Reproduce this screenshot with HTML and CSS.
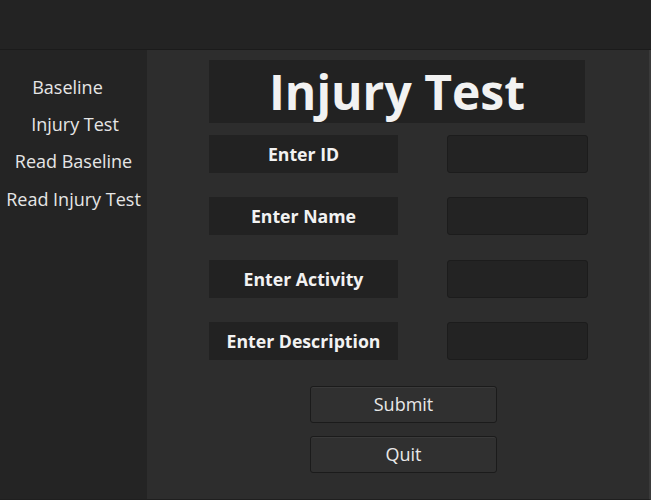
FILE: index.html
```html
<!DOCTYPE html>
<html>
<head>
<meta charset="utf-8">
<link rel="stylesheet" href="styles.css">
</head>
<body>
<div class="app">
  <div class="topbar"></div>
  <div class="content">
    <nav class="sidebar">
      <div class="nav-item nav-left">Baseline</div>
      <div class="nav-item nav-right">Injury Test</div>
      <div class="nav-item">Read Baseline</div>
      <div class="nav-item">Read Injury Test</div>
    </nav>
    <main class="main">
      <div class="title">Injury Test</div>
      <div class="form">
        <div class="row"><div class="label">Enter ID</div><input class="field" type="text"></div>
        <div class="row"><div class="label">Enter Name</div><input class="field" type="text"></div>
        <div class="row"><div class="label">Enter Activity</div><input class="field" type="text"></div>
        <div class="row"><div class="label">Enter Description</div><input class="field" type="text"></div>
      </div>
      <div class="buttons">
        <button class="btn">Submit</button>
        <button class="btn">Quit</button>
      </div>
    </main>
  </div>
</div>
</body>
</html>
```
FILE: styles.css
```css
html, body {
  margin: 0;
  padding: 0;
  background: #2d2d2d;
}
body {
  font-family: "Open Sans", "DejaVu Sans", sans-serif;
  color: #ececec;
}
.app {
  width: 651px;
  height: 500px;
  display: flex;
  flex-direction: column;
  overflow: hidden;
}
.topbar {
  height: 49px;
  background: #232323;
  border-bottom: 1px solid #1b1b1b;
  flex: none;
}
.content {
  flex: 1;
  display: flex;
}
.sidebar {
  width: 147px;
  flex: none;
  background: #242424;
  padding-top: 18px;
  box-sizing: border-box;
  border-bottom: 1px solid #1f1f1f;
}
.nav-item {
  height: 37.4px;
  display: flex;
  align-items: center;
  justify-content: center;
  font-size: 18px;
  color: #e6e6e6;
  white-space: nowrap;
}
.nav-left {
  padding-right: 12px;
}
.nav-right {
  padding-left: 3px;
}
.main {
  flex: 1;
  background: #2d2d2d;
  padding: 10px 0 0 62px;
  border-right: 2px solid #3a3a3a;
  border-bottom: 1px solid #1f1f1f;
  box-sizing: border-box;
}
.title {
  width: 376px;
  height: 63px;
  background: #222222;
  display: flex;
  align-items: center;
  justify-content: center;
  font-size: 48px;
  font-weight: 700;
  color: #f2f2f2;
}
.form {
  margin-top: 12px;
  display: flex;
  flex-direction: column;
  gap: 24.3px;
}
.row {
  display: flex;
  gap: 49px;
  height: 38px;
}
.label {
  width: 189px;
  background: #222222;
  display: flex;
  align-items: center;
  justify-content: center;
  font-size: 17.7px;
  font-weight: 700;
  color: #f2f2f2;
  white-space: nowrap;
}
.field {
  width: 141px;
  height: 38px;
  box-sizing: border-box;
  margin: 0;
  background: #232323;
  border: 1px solid #1c1c1c;
  border-radius: 3px;
  color: #eee;
  outline: none;
}
.buttons {
  margin-top: 26px;
  margin-left: 101px;
  display: flex;
  flex-direction: column;
  gap: 13px;
}
.btn {
  width: 187px;
  height: 37px;
  background: #303030;
  border: 1px solid #1b1b1b;
  border-radius: 3px;
  box-shadow: inset 0 1px 0 #3a3a3a;
  color: #e8e8e8;
  font-family: "Open Sans", "DejaVu Sans", sans-serif;
  font-size: 18px;
  padding: 0;
}
```
